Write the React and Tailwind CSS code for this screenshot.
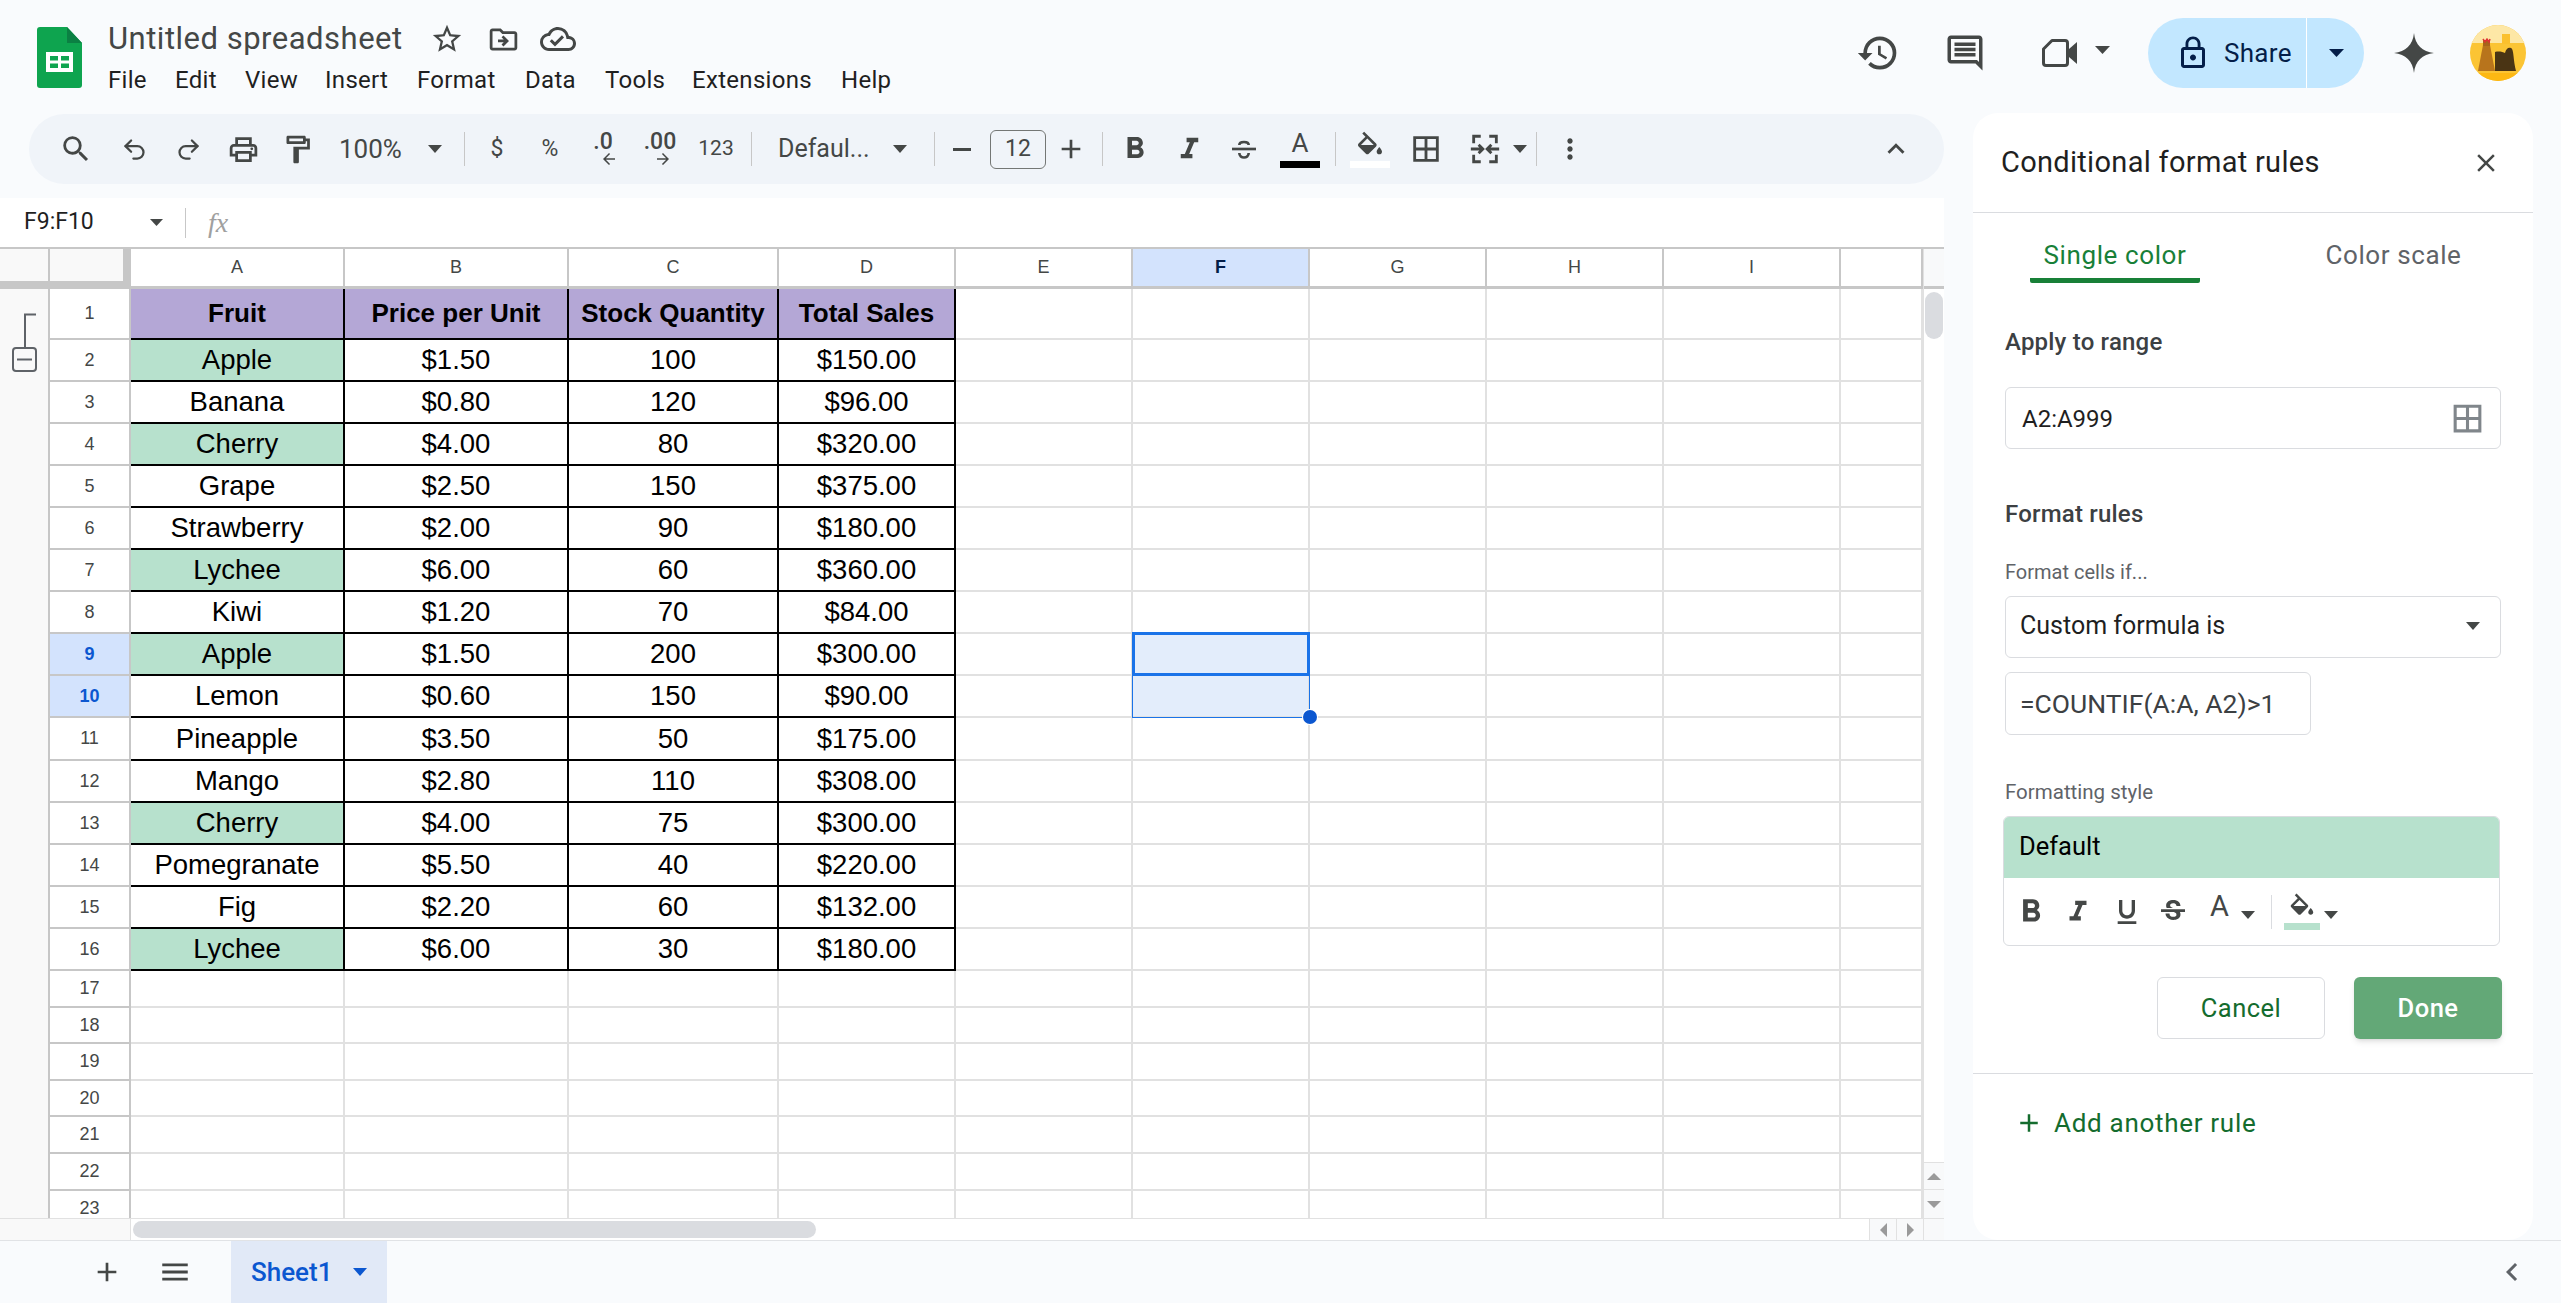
import {
  MdSearch, MdOutlineLocalPrintshop, MdOutlineFormatPaint, MdStarBorder, MdOutlineDriveFileMove, MdOutlineCloudDone,
  MdHistory, MdOutlineComment, MdLockOutline, MdFormatBold, MdFormatItalic, MdFormatUnderlined, MdStrikethroughS,
  MdBorderAll, MdMoreVert, MdExpandLess, MdClose, MdAdd, MdMenu, MdChevronLeft, MdArrowBack, MdArrowForward,
} from 'react-icons/md';
import { Undo2, Redo2 } from 'lucide-react';

const Caret = ({ className = 'w-[14px] h-[8px]' }) => (
  <svg viewBox="0 0 10 5" className={className} preserveAspectRatio="none">
    <path d="M0 0L5 5L10 0z" fill="currentColor" />
  </svg>
);

const SideCaret = ({ left }) => (
  <svg viewBox="0 0 7 14" className="w-[7px] h-[14px]">
    <path d={left ? 'M7 0L0 7L7 14z' : 'M0 0L7 7L0 14z'} fill="currentColor" />
  </svg>
);

const Sep = ({ className = '' }) => <div className={`w-px h-[34px] bg-[#c7c7c7] ${className}`} />;

const Logo = () => (
  <svg viewBox="0 0 45 61" className="w-[45px] h-[61px]">
    <path d="M3 0H30L45 16V58a3 3 0 0 1-3 3H3a3 3 0 0 1-3-3V3a3 3 0 0 1 3-3z" fill="#0ea44f" />
    <path d="M30 0L45 16H30z" fill="#0b8043" />
    <path d="M9 25h27v20H9z" fill="#fff" />
    <path d="M13 29h8v4.5h-8zM24 29h8v4.5h-8zM13 36.500h8V41h-8zM24 36.500h8V41h-8z" fill="#0ea44f" />
  </svg>
);

const Spark = () => (
  <svg viewBox="0 0 24 24" className="w-[40px] h-[42px]">
    <path d="M12 0C12.700 7 17 11.300 24 12C17 12.700 12.700 17 12 24C11.300 17 7 12.700 0 12C7 11.300 11.300 7 12 0z" fill="#444746" />
  </svg>
);

const Avatar = () => (
  <svg viewBox="0 0 56 56" className="w-[56px] h-[56px] rounded-full">
    <rect width="56" height="56" fill="#fbc434" />
    <rect width="56" height="18" fill="#fde7a6" />
    <rect y="48" width="56" height="8" fill="#fdb813" />
    <path d="M8 46L13 20h7l5 26z" fill="#b8741c" />
    <path d="M13 15h7v6h-7z" fill="#a8641a" />
    <path d="M13 14l2 3 2-3 2 3 1-3" stroke="#d33" strokeWidth="1.500" fill="none" />
    <path d="M25 46V27c4-1 8 0 10 1 1-4 3-6 6-5 3 1 2 12 5 23z" fill="#4a3414" />
    <rect x="32" y="9" width="8" height="10" fill="#fbc02d" />
  </svg>
);

const VideoIcon = () => (
  <svg viewBox="0 0 36 28" className="w-[36px] h-[28px]">
    <path d="M10 1.500H23a2.500 2.500 0 0 1 2.500 2.500V24a2.500 2.500 0 0 1-2.500 2.500H4A2.500 2.500 0 0 1 1.500 24V10z" fill="none" stroke="#444746" strokeWidth="3" strokeLinejoin="round" />
    <path d="M27 10L35 3V25L27 18z" fill="#444746" />
  </svg>
);

const FillIcon = ({ className }) => (
  <svg viewBox="0 0 24 20" className={className}>
    <path d="M16.560 8.940L7.620 0 6.210 1.410l2.380 2.380-5.150 5.150c-.59.59-.59 1.540 0 2.120l5.500 5.500c.29.290.68.440 1.060.440s.77-.15 1.060-.44l5.500-5.500c.59-.58.59-1.530 0-2.120zM5.210 10L10 5.210 14.790 10H5.210zM19 11.500s-2 2.170-2 3.500c0 1.100.9 2 2 2s2-.9 2-2c0-1.330-2-3.500-2-3.500z" fill="currentColor" />
    <path d="M5 10h10l-5 5z" fill="currentColor" />
  </svg>
);

const MergeIcon = () => (
  <svg viewBox="0 0 24 24" className="w-[34px] h-[34px]" fill="none" stroke="#444746" strokeWidth="2">
    <path d="M4 8V3h5M4 16v5h5M20 8V3h-5M20 16v5h-5" />
    <path d="M2 12h8M7.500 9L10.500 12L7.500 15M22 12h-8M16.500 9L13.500 12L16.500 15" />
  </svg>
);

const StrikeIcon = () => (
  <svg viewBox="0 0 24 24" className="w-[32px] h-[32px] shrink-0" fill="none" stroke="#444746" strokeWidth="2">
    <path d="M3 12h18" />
    <path d="M8.500 9c0-3 7-3 7 0M8.500 15c0 4.500 7 4.500 7 0" />
  </svg>
);

const GroupMark = () => (
  <svg viewBox="0 0 26 60" className="w-[26px] h-[60px]" fill="none" stroke="#5f6368">
    <path d="M25 1.500H14V35" strokeWidth="2" />
    <rect x="2" y="35" width="23" height="23" rx="3" strokeWidth="2" />
    <path d="M6 46.500H21" strokeWidth="2" />
  </svg>
);

const menu = [
  ['File', 'w-[67px]'], ['Edit', 'w-[70px]'], ['View', 'w-[80px]'], ['Insert', 'w-[92px]'], ['Format', 'w-[108px]'],
  ['Data', 'w-[80px]'], ['Tools', 'w-[87px]'], ['Extensions', 'w-[149px]'], ['Help', 'w-[60px]'],
];

const colWidths = ['w-[214px]', 'w-[224px]', 'w-[210px]', 'w-[177px]', 'w-[177px]', 'w-[177px]', 'w-[177px]', 'w-[177px]', 'w-[177px]', 'w-[82px]'];
const colNames = ['A', 'B', 'C', 'D', 'E', 'F', 'G', 'H', 'I', ''];

const sheetRows = [
  ['Apple', '$1.50', '100', '$150.00', true],
  ['Banana', '$0.80', '120', '$96.00', false],
  ['Cherry', '$4.00', '80', '$320.00', true],
  ['Grape', '$2.50', '150', '$375.00', false],
  ['Strawberry', '$2.00', '90', '$180.00', false],
  ['Lychee', '$6.00', '60', '$360.00', true],
  ['Kiwi', '$1.20', '70', '$84.00', false],
  ['Apple', '$1.50', '200', '$300.00', true],
  ['Lemon', '$0.60', '150', '$90.00', false],
  ['Pineapple', '$3.50', '50', '$175.00', false],
  ['Mango', '$2.80', '110', '$308.00', false],
  ['Cherry', '$4.00', '75', '$300.00', true],
  ['Pomegranate', '$5.50', '40', '$220.00', false],
  ['Fig', '$2.20', '60', '$132.00', false],
  ['Lychee', '$6.00', '30', '$180.00', true],
];

const rowHeights = ['h-[42px]', 'h-[42px]', 'h-[42px]', 'h-[42px]', 'h-[42px]', 'h-[42px]', 'h-[42px]', 'h-[42px]', 'h-[42px]', 'h-[43px]', 'h-[42px]', 'h-[42px]', 'h-[42px]', 'h-[42px]', 'h-[42px]'];
const emptyHeights = ['h-[37px]', 'h-[36px]', 'h-[37px]', 'h-[36px]', 'h-[37px]', 'h-[37px]', 'h-[37px]'];

const RowNum = ({ n, selected }) => (
  <div className={`w-[81px] shrink-0 flex items-center justify-center border-r-2 border-b-2 border-[#c7c7c7] text-[18px] ${selected ? 'bg-[#d3e3fd] text-[#0b57d0] font-bold' : 'text-[#444746]'}`}>
    {n}
  </div>
);

const Toolbar = () => (
  <div className="ml-[29px] w-[1915px] h-[70px] rounded-full bg-[#f0f4f9] flex items-center pl-[16px] text-[#444746] shrink-0">
    <div className="w-[62px] flex justify-center"><MdSearch size={34} /></div>
    <div className="w-[54px] flex justify-center"><Undo2 size={27} strokeWidth={2} /></div>
    <div className="w-[54px] flex justify-center"><Redo2 size={27} strokeWidth={2} /></div>
    <div className="w-[56px] flex justify-center"><MdOutlineLocalPrintshop size={33} /></div>
    <div className="w-[52px] flex justify-center"><MdOutlineFormatPaint size={33} /></div>
    <div className="w-[127px] flex items-center pl-[16px] text-[26px]">
      <span className="w-[89px]">100%</span>
      <Caret />
    </div>
    <div className="w-[28px] flex justify-center"><Sep /></div>
    <div className="w-[38px] text-center text-[23px]">$</div>
    <div className="w-[68px] text-center text-[23px]">%</div>
    <div className="w-[38px] flex flex-col items-center leading-none text-[23px] font-medium">
      <span className="h-[21px]">.0</span>
      <MdArrowBack size={18} className="-mt-[1px] ml-[12px]" />
    </div>
    <div className="w-[76px] flex flex-col items-center leading-none text-[23px] font-medium">
      <span className="h-[21px]">.00</span>
      <MdArrowForward size={18} className="-mt-[1px] ml-[6px]" />
    </div>
    <div className="w-[36px] text-center text-[21px]">123</div>
    <div className="w-[34px] flex justify-center"><Sep /></div>
    <div className="w-[152px] flex items-center pl-[10px] text-[25px]">
      <span className="w-[115px]">Defaul...</span>
      <Caret />
    </div>
    <div className="w-[28px] flex justify-center"><Sep /></div>
    <div className="w-[28px] flex justify-center"><div className="w-[18px] h-[3px] bg-[#444746]" /></div>
    <div className="ml-[14px] w-[56px] h-[39px] rounded-[6px] border border-[#747775] flex items-center justify-center text-[23px]">12</div>
    <div className="ml-[10px] w-[30px] flex justify-center"><MdAdd size={32} className="shrink-0" /></div>
    <div className="ml-[16px]"><Sep /></div>
    <div className="ml-[19px] w-[26px] flex justify-center"><MdFormatBold size={36} className="shrink-0" /></div>
    <div className="ml-[28px] w-[26px] flex justify-center"><MdFormatItalic size={35} className="shrink-0" /></div>
    <div className="ml-[28px] w-[28px] flex justify-center"><StrikeIcon /></div>
    <div className="ml-[22px] w-[40px] flex flex-col items-center">
      <span className="h-[26px] text-[26px] leading-[26px]">A</span>
      <div className="mt-[5px] w-[40px] h-[7px] bg-black" />
    </div>
    <div className="ml-[15px]"><Sep /></div>
    <div className="ml-[14px] w-[40px] flex flex-col items-center">
      <FillIcon className="w-[32px] h-[28px]" />
      <div className="mt-[2px] w-[40px] h-[7px] bg-white" />
    </div>
    <div className="ml-[20px] w-[32px] flex justify-center"><MdBorderAll size={34} className="shrink-0" /></div>
    <div className="ml-[26px] w-[34px] flex justify-center"><MergeIcon /></div>
    <div className="ml-[10px] w-[16px] flex justify-center"><Caret /></div>
    <div className="ml-[8px]"><Sep /></div>
    <div className="ml-[17px] w-[32px] flex justify-center"><MdMoreVert size={32} /></div>
    <div className="ml-auto mr-[32px] w-[32px] flex justify-center"><MdExpandLess size={34} className="shrink-0" /></div>
  </div>
);

const Grid = () => (
  <div className="h-[993px] flex flex-col bg-white border-t-2 border-[#c7c7c7] shrink-0 font-['Liberation_Sans',sans-serif]">
    <div className="h-[969px] flex overflow-hidden">
      {/* outline gutter */}
      <div className="w-[50px] shrink-0 flex flex-col bg-[#f9f9f9] border-r-2 border-[#c7c7c7]">
        <div className="h-[32px]" />
        <div className="h-[8px] -mr-[2px] bg-[#c7c7c7]" />
        <div className="mt-[24px] ml-[11px]"><GroupMark /></div>
      </div>
      <div className="w-[1873px] shrink-0 flex flex-col">
        <div className="flex h-[40px] shrink-0">
          <div className="w-[81px] shrink-0 bg-[#f9f9f9] border-r-[8px] border-b-[8px] border-[#c7c7c7]" />
          {colNames.map((c, i) => (
            <div key={i} className={`${colWidths[i]} shrink-0 flex items-center justify-center text-[18px] border-r-2 border-b-[3px] border-[#c7c7c7] ${c === 'F' ? 'bg-[#d3e3fd] text-[#041e49] font-bold' : 'text-[#444746]'}`}>
              {c}
            </div>
          ))}
        </div>

        {/* header row */}
        <div className="flex h-[51px] shrink-0">
          <RowNum n={1} />
          {['Fruit', 'Price per Unit', 'Stock Quantity', 'Total Sales'].map((t, i) => (
            <div key={t} className={`${colWidths[i]} shrink-0 flex items-center justify-center bg-[#b4a7d6] text-black font-bold text-[26px] border-r-2 border-b-2 border-black`}>
              {t}
            </div>
          ))}
          {[4, 5, 6, 7, 8, 9].map((i) => (
            <div key={i} className={`${colWidths[i]} shrink-0 border-r-2 border-b-2 border-[#e1e1e1]`} />
          ))}
        </div>

        {sheetRows.map((r, idx) => (
          <div key={idx} className={`flex shrink-0 ${rowHeights[idx]}`}>
            <RowNum n={idx + 2} selected={idx === 7 || idx === 8} />
            {[0, 1, 2, 3].map((i) => (
              <div key={i} className={`${colWidths[i]} shrink-0 flex items-center justify-center text-black text-[27.5px] border-r-2 border-b-2 border-black ${i === 0 && r[4] ? 'bg-[#b7e1cd]' : ''}`}>
                {r[i]}
              </div>
            ))}
            {[4, 5, 6, 7, 8, 9].map((i) => (
              <div key={i} className={`${colWidths[i]} shrink-0 border-r-2 border-b-2 border-[#e1e1e1] relative ${i === 5 && (idx === 7 || idx === 8) ? 'bg-[#e3edfb]' : ''}`}>
                {i === 5 && idx === 7 && (
                  <div className="absolute z-10 -left-[1px] -top-[2px] w-[178px] h-[44px] border-[3px] border-[#1a73e8]" />
                )}
                {i === 5 && idx === 8 && (
                  <>
                    <div className="absolute z-10 -left-[1px] -top-[1px] w-[178px] h-[43px] border-x-[1px] border-b-[1px] border-[#1a73e8]" />
                    <div className="absolute z-20 -right-[9px] -bottom-[8px] w-[14px] h-[14px] rounded-full bg-[#0b57d0] ring-1 ring-white" />
                  </>
                )}
              </div>
            ))}
          </div>
        ))}

        {emptyHeights.map((h, idx) => (
          <div key={idx} className={`flex shrink-0 ${h}`}>
            <RowNum n={idx + 17} />
            {colWidths.map((w, i) => (
              <div key={i} className={`${w} shrink-0 border-r-2 border-b-2 border-[#e1e1e1]`} />
            ))}
          </div>
        ))}
      </div>

      {/* vertical scrollbar */}
      <div className="w-[21px] shrink-0 flex flex-col border-l border-[#e1e1e1]">
        <div className="h-[40px] shrink-0 bg-[#f8f9fa] border-b-[3px] border-[#c7c7c7]" />
        <div className="h-[873px] shrink-0 pt-[3px] px-[1px]">
          <div className="h-[47px] rounded-full bg-[#dadce0]" />
        </div>
        <div className="h-[28px] shrink-0 flex items-center justify-center bg-[#f8f9fa] border-y border-[#e1e1e1] text-[#9a9a9a]">
          <Caret className="w-[14px] h-[7px] rotate-180" />
        </div>
        <div className="h-[28px] shrink-0 flex items-center justify-center bg-[#f8f9fa] text-[#9a9a9a]">
          <Caret className="w-[14px] h-[7px]" />
        </div>
      </div>
    </div>

    {/* horizontal scrollbar */}
    <div className="flex-1 flex items-stretch border-t border-[#e1e1e1]">
      <div className="w-[131px] shrink-0 bg-[#f9f9f9] border-r border-[#e1e1e1]" />
      <div className="w-[1738px] shrink-0 py-[2px]">
        <div className="ml-[2px] w-[683px] h-full rounded-full bg-[#dadce0]" />
      </div>
      <div className="w-[28px] shrink-0 flex items-center justify-center bg-[#f8f9fa] border-x border-[#e1e1e1] text-[#9a9a9a]">
        <SideCaret left />
      </div>
      <div className="w-[27px] shrink-0 flex items-center justify-center bg-[#f8f9fa] border-r border-[#e1e1e1] text-[#9a9a9a]">
        <SideCaret />
      </div>
      <div className="flex-1 bg-[#f8f9fa]" />
    </div>
  </div>
);

const Panel = () => (
  <div className="ml-[29px] w-[560px] h-[1127px] -mt-px rounded-[25px] bg-white flex flex-col shrink-0 text-[#1f1f1f]">
    <div className="h-[100px] shrink-0 border-b border-[#dadce0] flex items-center pl-[28px] pr-[32px]">
      <span className="text-[29px] tracking-[0.3px]">Conditional format rules</span>
      <MdClose size={30} className="ml-auto text-[#444746]" />
    </div>
    <div className="flex h-[70px] shrink-0">
      <div className="ml-[57px] w-[170px] h-[70px] pt-[20px] border-b-[5px] border-[#188038] rounded-b-[2px] flex items-center justify-center text-[26px] tracking-[0.6px] text-[#188038]">Single color</div>
      <div className="ml-[107px] w-[173px] pt-[20px] pb-[5px] flex items-center justify-center text-[26px] tracking-[0.6px] text-[#5f6368]">Color scale</div>
    </div>
    <div className="ml-[32px] mt-[44px] h-[30px] flex items-center text-[24px] tracking-[0.2px] font-medium text-[#3c4043]">Apply to range</div>
    <div className="ml-[32px] mt-[30px] w-[496px] h-[62px] rounded-[6px] border border-[#dadce0] flex items-center pt-[1px] pl-[16px] pr-[14px] text-[24px]">
      <span>A2:A999</span>
      <MdBorderAll size={37} className="ml-auto text-[#80868b]" />
    </div>
    <div className="ml-[32px] mt-[50px] h-[30px] flex items-center text-[24px] tracking-[0.2px] font-medium text-[#3c4043]">Format rules</div>
    <div className="ml-[32px] mt-[30px] h-[26px] flex items-center text-[20px] text-[#5f6368]">Format cells if...</div>
    <div className="ml-[32px] mt-[11px] w-[496px] h-[62px] rounded-[6px] border border-[#dadce0] flex items-center pb-[2px] pl-[14px] pr-[20px] text-[25px]">
      <span>Custom formula is</span>
      <Caret className="ml-auto w-[14px] h-[8px] text-[#444746]" />
    </div>
    <div className="ml-[32px] mt-[14px] w-[306px] h-[63px] rounded-[6px] border border-[#dadce0] flex items-center pl-[14px] text-[26.5px] text-[#3c4043]">=COUNTIF(A:A, A2)&gt;1</div>
    <div className="ml-[32px] mt-[44px] h-[26px] flex items-center text-[20.5px] text-[#5f6368]">Formatting style</div>
    <div className="ml-[30px] mt-[11px] w-[497px] h-[130px] rounded-[6px] border border-[#dadce0] flex flex-col overflow-hidden">
      <div className="h-[61px] shrink-0 bg-[#b7e1cd] flex items-center pb-[2px] pl-[15px] text-[25.5px] text-black">Default</div>
      <div className="flex-1 flex items-center pl-[8px] text-[#444746]">
        <MdFormatBold size={38} />
        <MdFormatItalic size={34} className="ml-[11px]" />
        <MdFormatUnderlined size={32} className="ml-[16px]" />
        <MdStrikethroughS size={32} className="ml-[14px]" />
        <span className="ml-[21px] -mt-[10px] text-[29px] leading-none">A</span>
        <Caret className="ml-[12px] mt-[6px] w-[14px] h-[8px]" />
        <div className="ml-[16px] w-px h-[34px] bg-[#dadce0]" />
        <div className="ml-[12px] w-[36px] flex flex-col items-center">
          <FillIcon className="w-[30px] h-[26px]" />
          <div className="mt-[4px] w-[36px] h-[7px] bg-[#b7e1cd]" />
        </div>
        <Caret className="ml-[4px] mt-[6px] w-[14px] h-[8px]" />
      </div>
    </div>
    <div className="ml-[30px] mt-[31px] w-[499px] flex justify-end gap-[29px]">
      <div className="w-[168px] h-[62px] rounded-[6px] border border-[#dadce0] flex items-center justify-center text-[25.5px] tracking-[0.5px] text-[#146c2e]">Cancel</div>
      <div className="w-[148px] h-[62px] rounded-[6px] bg-[#63a877] shadow-md flex items-center justify-center text-[25.5px] tracking-[0.5px] font-medium text-white">Done</div>
    </div>
    <div className="mt-[34px] h-px bg-[#dadce0] shrink-0" />
    <div className="ml-[44px] mt-[29px] h-[40px] flex items-center text-[#146c2e] text-[26px]">
      <MdAdd size={30} className="-ml-[3px]" />
      <span className="ml-[10px] tracking-[0.7px]">Add another rule</span>
    </div>
  </div>
);

export default function App() {
  return (
    <div className="w-[2561px] h-[1306px] bg-white overflow-hidden flex flex-col font-['Roboto',sans-serif]">
      <div className="h-[1303px] bg-[#f9fbfd] flex flex-col">
        {/* top bar */}
        <div className="h-[114px] shrink-0 flex items-start">
          <div className="ml-[37px] mt-[27px]"><Logo /></div>
          <div className="ml-[26px] flex flex-col">
            <div className="mt-[19px] h-[40px] flex items-center text-[#444746]">
              <span className="text-[31px] tracking-[0.5px]">Untitled spreadsheet</span>
              <MdStarBorder size={34} className="ml-[27px]" />
              <MdOutlineDriveFileMove size={33} className="ml-[23px]" />
              <MdOutlineCloudDone size={36} className="ml-[20px]" />
            </div>
            <div className="mt-[3px] h-[36px] flex items-center text-[24px] tracking-[0.3px] text-[#1f1f1f]">
              {menu.map(([m, w]) => <span key={m} className={w}>{m}</span>)}
            </div>
          </div>
          <div className="ml-auto flex items-center h-[70px] mt-[18px]">
            <MdHistory size={44} className="text-[#444746]" />
            <MdOutlineComment size={42} className="ml-[44px] text-[#444746]" />
            <div className="ml-[56px]"><VideoIcon /></div>
            <Caret className="ml-[17px] w-[15px] h-[8px] -mt-[6px] text-[#444746]" />
            <div className="ml-[38px] w-[216px] h-[70px] rounded-full bg-[#c2e7ff] flex items-center text-[#041e49]">
              <MdLockOutline size={36} className="ml-[27px]" />
              <span className="ml-[13px] text-[26px] tracking-[0.3px] w-[82px]">Share</span>
              <div className="w-px h-[70px] bg-white" />
              <Caret className="ml-[22px] w-[15px] h-[8px]" />
            </div>
            <div className="ml-[30px]"><Spark /></div>
            <div className="ml-[36px] mr-[35px]"><Avatar /></div>
          </div>
        </div>

        <div className="h-[1126px] flex shrink-0">
          <div className="w-[1944px] shrink-0 flex flex-col">
            <Toolbar />
            {/* formula bar */}
            <div className="mt-[14px] h-[49px] shrink-0 bg-white flex items-center text-[#1f1f1f]">
              <span className="ml-[24px] w-[126px] text-[23px]">F9:F10</span>
              <Caret className="w-[13px] h-[7px] text-[#444746]" />
              <div className="ml-[22px] w-px h-[30px] bg-[#c7c7c7]" />
              <span className="ml-[22px] font-['Liberation_Serif',serif] italic text-[28px] text-[#a0a0a0]">fx</span>
            </div>
            <Grid />
          </div>
          <Panel />
        </div>

        {/* sheet tabs */}
        <div className="h-[63px] shrink-0 border-t border-[#e1e3e6] flex items-stretch text-[#444746]">
          <div className="w-[214px] flex items-center shrink-0">
            <MdAdd size={32} className="ml-[91px]" />
            <MdMenu size={34} className="ml-[35px]" />
          </div>
          <div className="ml-[17px] w-[156px] bg-[#e1e9f7] flex items-center pl-[20px] text-[#0b57d0]">
            <span className="text-[26px] font-medium w-[102px]">Sheet1</span>
            <Caret className="w-[14px] h-[8px]" />
          </div>
          <MdChevronLeft size={36} className="ml-auto mr-[31px] self-center text-[#5f6368]" />
        </div>
      </div>
    </div>
  );
}
